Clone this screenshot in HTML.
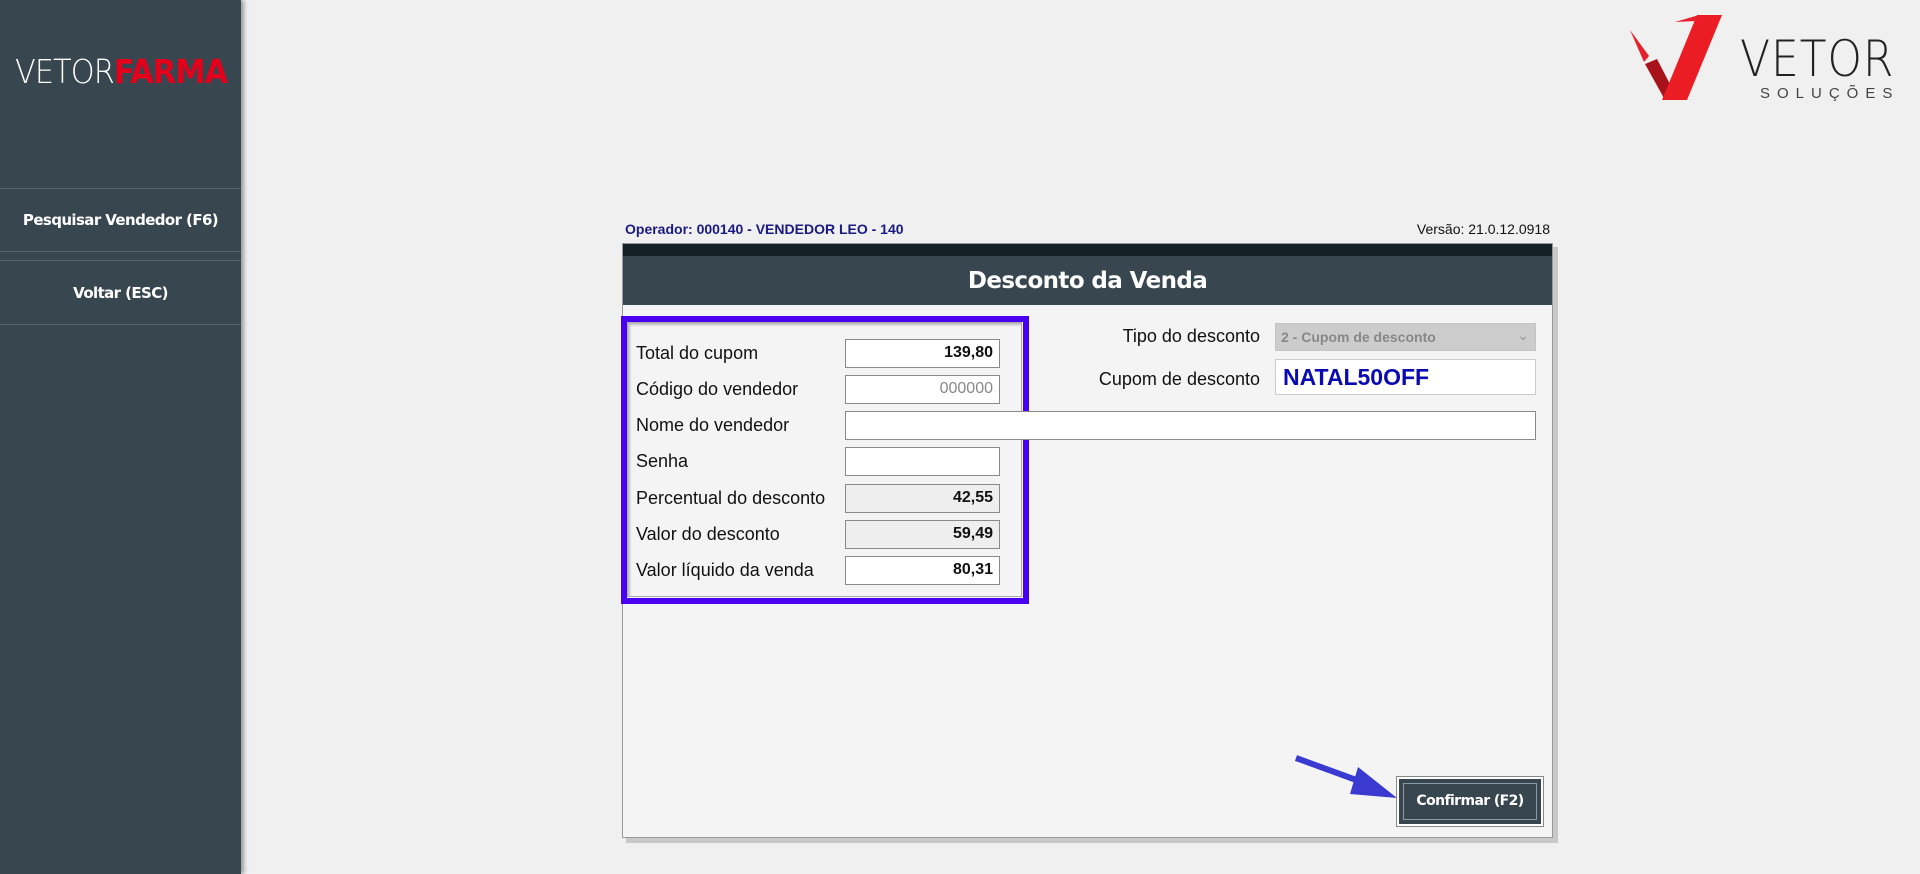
<!DOCTYPE html>
<html><head><meta charset="utf-8"><style>
*{box-sizing:border-box;margin:0;padding:0}
body{width:1920px;height:874px;background:#f0f0f0;font-family:"Liberation Sans",sans-serif;position:relative;overflow:hidden}
.abs{position:absolute}
#side{left:0;top:0;width:241px;height:874px;background:#37464f;box-shadow:3px 0 4px rgba(0,0,0,.35)}
.sep{left:0;width:241px;height:1px;background:#55626a}
.btn{left:0;width:241px;text-align:center;color:#fff;font-weight:bold;font-size:15px;font-family:"DejaVu Sans","Liberation Sans",sans-serif;letter-spacing:-.6px}
.lbl{left:636px;font-size:18px;color:#111}
.inp{left:845px;width:155px;height:29px;background:#fff;border:1px solid #8a8a8a;font-size:16px;font-weight:bold;text-align:right;padding:4px 6px 0 0;color:#111}
.gray{background:#eeeeee}
</style></head><body>
<div id="side" class="abs"></div>
<div class="abs" style="left:15px;top:52px;font-size:33px;color:#fff;letter-spacing:-1px;font-family:'DejaVu Sans',sans-serif;font-weight:300;transform:scaleX(.92);transform-origin:left">VETOR<span style="color:#e4001b;font-weight:bold">FARMA</span></div>
<div class="abs sep" style="top:188px"></div>
<div class="abs btn" style="top:211px">Pesquisar Vendedor (F6)</div>
<div class="abs sep" style="top:251px"></div>
<div class="abs sep" style="top:260px"></div>
<div class="abs btn" style="top:284px">Voltar (ESC)</div>
<div class="abs sep" style="top:324px"></div>

<svg class="abs" style="left:1625px;top:12px" width="100" height="92" viewBox="0 0 100 92">
<polygon points="5,18 24,44 19,50" fill="#e8202a"/>
<polygon points="20,52 32,47 47,76 40,88" fill="#a8121a"/>
<polygon points="37,88 62,88 97,3 72,3" fill="#ec1c24"/>
<polygon points="50,10 74,3 72,9" fill="#e8202a"/>
</svg>
<div class="abs" style="left:1740px;top:30px;font-size:50px;color:#222;font-family:'DejaVu Sans',sans-serif;font-weight:200;letter-spacing:1px;transform:scaleX(.88);transform-origin:left">VETOR</div>
<div class="abs" style="left:1760px;top:85px;font-size:15px;color:#444;letter-spacing:7px">SOLUÇÕES</div>

<div class="abs" style="left:625px;top:221px;font-size:14px;font-weight:bold;color:#1a1a80">Operador: 000140 - VENDEDOR LEO - 140</div>
<div class="abs" style="left:1390px;top:221px;width:160px;text-align:right;font-size:14px;color:#111">Versão: 21.0.12.0918</div>

<div class="abs" style="left:626px;top:247px;width:932px;height:596px;background:#c8c8c8"></div>
<div class="abs" style="left:622px;top:243px;width:931px;height:595px;background:#f4f4f4;border:1px solid #999"></div>
<div class="abs" style="left:623px;top:244px;width:929px;height:12px;background:#132026"></div>
<div class="abs" style="left:623px;top:256px;width:929px;height:49px;background:#37464f;color:#fff;font-weight:bold;font-size:23px;text-align:center;line-height:50px;font-family:'DejaVu Sans',sans-serif;letter-spacing:-.6px">Desconto da Venda</div>

<div class="abs" style="left:627px;top:322px;width:395px;height:275px;border:1px solid #aaa;box-shadow:inset 2px 2px 2px #bbb"></div>
<div class="abs" style="left:621px;top:316px;width:408px;height:288px;border:6px solid #4a00f0"></div>

<div class="abs lbl" style="top:343px">Total do cupom</div>
<div class="abs inp" style="top:339px">139,80</div>
<div class="abs lbl" style="top:379px">Código do vendedor</div>
<div class="abs inp" style="top:375px;color:#888;font-weight:normal">000000</div>
<div class="abs lbl" style="top:415px">Nome do vendedor</div>
<div class="abs inp" style="top:411px;width:691px"></div>
<div class="abs lbl" style="top:451px">Senha</div>
<div class="abs inp" style="top:447px"></div>
<div class="abs lbl" style="top:488px">Percentual do desconto</div>
<div class="abs inp gray" style="top:484px">42,55</div>
<div class="abs lbl" style="top:524px">Valor do desconto</div>
<div class="abs inp gray" style="top:520px">59,49</div>
<div class="abs lbl" style="top:560px">Valor líquido da venda</div>
<div class="abs inp" style="top:556px">80,31</div>

<div class="abs" style="left:1080px;top:326px;width:180px;text-align:right;font-size:18px;color:#111">Tipo do desconto</div>
<div class="abs" style="left:1275px;top:323px;width:261px;height:28px;background:#cccccc;border:1px solid #c4c4c4;font-size:14px;font-weight:bold;color:#888;padding:5px 0 0 5px">2 - Cupom de desconto<span style="position:absolute;right:6px;top:3px;color:#999;font-weight:normal">&#8964;</span></div>
<div class="abs" style="left:1080px;top:369px;width:180px;text-align:right;font-size:18px;color:#111">Cupom de desconto</div>
<div class="abs" style="left:1275px;top:359px;width:261px;height:36px;background:#fff;border:1px solid #ccc;font-size:23px;font-weight:bold;color:#0a0ab0;padding:4px 0 0 7px">NATAL50OFF</div>

<svg class="abs" style="left:1290px;top:752px" width="115" height="55"><line x1="6" y1="6" x2="80" y2="33" stroke="#3a3ad0" stroke-width="6"/><polygon points="68,15 107,46 60,42" fill="#3a3ad0"/></svg>
<div class="abs" style="left:1397px;top:777px;width:146px;height:49px;background:#37464f;border:2px solid #fff;outline:1px solid #888"></div>
<div class="abs" style="left:1403px;top:783px;width:134px;height:37px;border:1px solid #8a9aa2;color:#fff;font-weight:bold;font-size:14px;text-align:center;line-height:35px;font-family:'DejaVu Sans',sans-serif;letter-spacing:-.6px">Confirmar (F2)</div>
</body></html>
